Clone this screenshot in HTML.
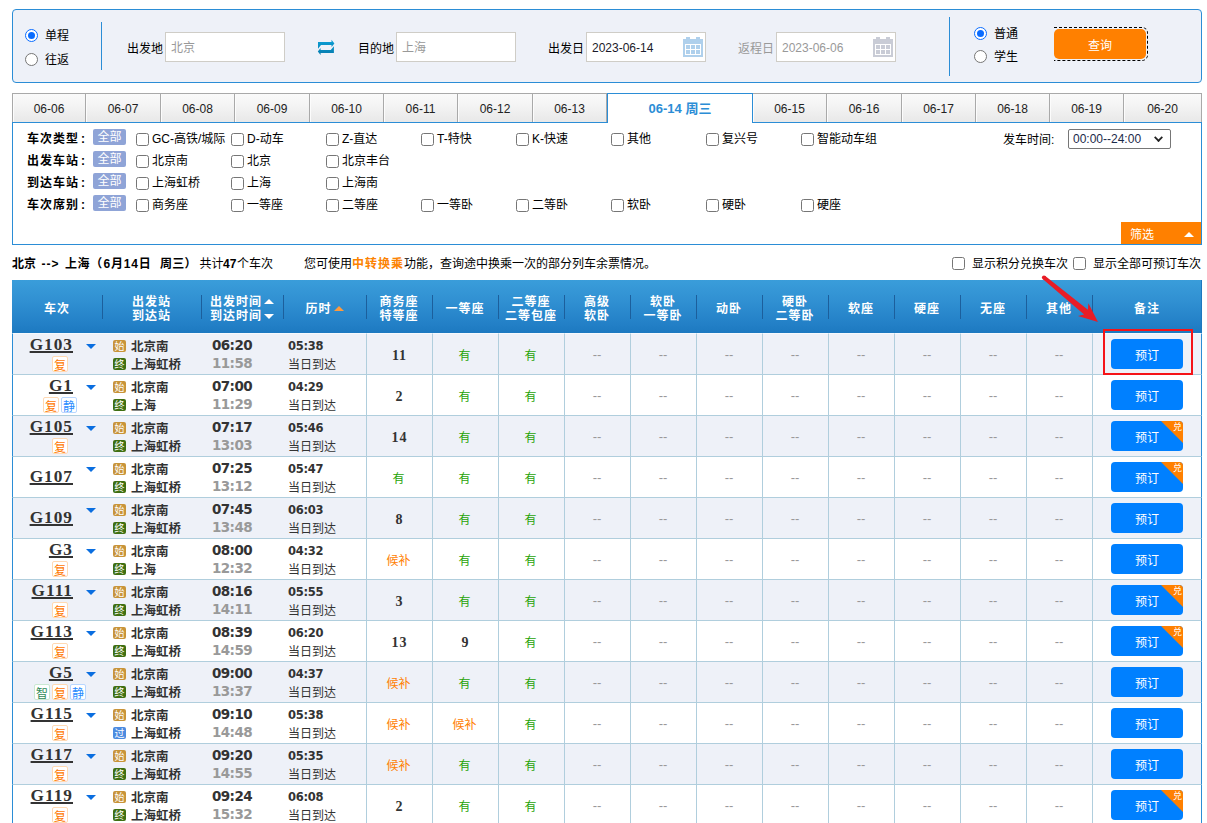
<!DOCTYPE html>
<html lang="zh-CN">
<head>
<meta charset="utf-8">
<title>车票预订</title>
<style>
*{margin:0;padding:0;box-sizing:border-box}
html,body{width:1207px;height:823px;overflow:hidden;background:#fff}
body{position:relative;font-family:"Liberation Sans","Noto Sans CJK SC",sans-serif;font-size:12px;color:#000;line-height:1}
ul{list-style:none}
i,em,u,s{font-style:normal;text-decoration:none}
.abs{position:absolute}

/* ---------- search panel ---------- */
#sear{position:absolute;left:12px;top:9px;width:1190px;height:74px;border:1px solid #2b8dd6;border-radius:4px;background:#eef1f8}
#sear .vl{position:absolute;width:1px;background:#2b8dd6}
.radio{position:absolute;width:13px;height:13px;border-radius:50%;border:1px solid #767676;background:#fff}
.radio.on{border:1.5px solid #0a6cff}
.radio.on:after{content:"";position:absolute;left:1.5px;top:1.5px;width:7px;height:7px;border-radius:50%;background:#0a6cff}
.rl{position:absolute;font-size:12px;line-height:14px;white-space:nowrap}
.lab{position:absolute;font-size:12px;line-height:16px;white-space:nowrap}
.inp{position:absolute;top:22px;width:120px;height:30px;border:1px solid #cfcdc7;background:#fff;font-size:12px;line-height:30px;padding-left:5px;color:#999;white-space:nowrap}
.cal{position:absolute;right:2px;top:4px}
#qwrap{position:absolute;left:1041px;top:17px;width:94px;height:34px;border:1px dashed #000;border-left:none;border-radius:0 6px 6px 0}
#qbtn{position:absolute;left:0;top:1px;width:92px;height:30px;border-radius:5px;background:#ff8000;color:#fff;font-size:12px;line-height:34px;text-align:center}

/* ---------- date tabs ---------- */
#tabs{position:absolute;left:12px;top:93px;width:1190px;height:30px}
#tabs:before{content:"";position:absolute;left:0;top:29px;width:100%;height:1px;background:#2b8dd6}
#tabs li{position:absolute;top:0;height:29px;border:1px solid #a9a9a9;border-left:none;border-bottom:none;background:linear-gradient(#fafafa,#f3f3f3 45%,#e8e8e8);font-size:12px;line-height:30px;text-align:center;color:#222;box-shadow:inset 1px 0 0 #fcfcfc}
#tabs li:first-child{border-left:1px solid #a9a9a9}
#tabs li.on{top:0;height:30px;z-index:1;border:1px solid #2b8dd6;border-bottom:none;background:#fff;color:#2b8dd6;font-weight:bold;font-size:13px;line-height:29px;box-shadow:none}

/* ---------- filter ---------- */
#filt{position:absolute;left:12px;top:122px;width:1190px;height:123px;border:1px solid #2b8dd6;border-top:none}
#filt .row{position:absolute;left:0;width:100%;height:22px}
#filt .fl{position:absolute;left:14px;top:3px;font-weight:bold;font-size:12px;line-height:16px;white-space:nowrap;letter-spacing:1px}
#filt .fl em{letter-spacing:0;margin-left:2px}
#filt .all{position:absolute;left:80px;top:1px;width:33px;height:16px;background:#8fa4d7;color:#fff;font-size:12px;line-height:16px;text-align:center;border-radius:2px}
.cb{position:absolute;top:3px;font-size:12px;line-height:16px;white-space:nowrap}
.cb i,.ck{display:inline-block;width:13px;height:13px;border:1px solid #767676;border-radius:2.5px;background:#fff;vertical-align:-2.5px;margin-right:3px}
#sel{position:absolute;left:1055px;top:7px;width:103px;height:20px;border:1px solid #767676;border-radius:2px;background:#fff;font-size:12px;line-height:19px;padding-left:4px;color:#1b2a4a}
#sel:after{content:"";position:absolute;right:8px;top:4px;width:5px;height:5px;border-right:2px solid #222;border-bottom:2px solid #222;transform:rotate(45deg) scale(.9)}
#sx{position:absolute;right:0;bottom:0;width:80px;height:22px;background:#ff8000;color:#fff;font-size:12px;line-height:26px;padding-left:9px}
#sx:after{content:"";position:absolute;right:7px;top:10px;border:5px solid transparent;border-top:none;border-bottom:5px solid #fff}

/* ---------- info line ---------- */
#info{position:absolute;left:12px;top:256px;width:1190px;height:16px;font-size:12px;line-height:16px;white-space:nowrap}
#info b{font-weight:bold}
#info .or{color:#fc8302;font-weight:bold;letter-spacing:1px}

/* ---------- table ---------- */
#thead{position:absolute;left:12px;top:280px;width:1190px;height:53px;z-index:2;background:linear-gradient(#3a9dda 0%,#3090d2 40%,#227fc6 85%,#1c79c0 100%);box-shadow:inset -1px 0 0 #1d78bf}
#thead div{position:absolute;top:0;height:53px;color:#fff;font-family:"Liberation Sans","Noto Sans CJK SC",sans-serif;font-weight:bold;font-size:12px;line-height:14.5px;letter-spacing:1px;text-align:center;display:flex;flex-direction:column;justify-content:center;white-space:nowrap;padding-top:5px}
#thead div:before{content:"";position:absolute;left:0;top:15px;width:1px;height:24px;background:#1c5f9c}
#thead div:first-child:before{display:none}
#thead .up{display:inline-block;border:5px solid transparent;border-top:none;border-bottom:5px solid #fff;vertical-align:2px;margin-left:2px}
#thead .dn{display:inline-block;border:5px solid transparent;border-bottom:none;border-top:5px solid #fff;vertical-align:1px;margin-left:2px}
#thead .upo{border-bottom-color:#ff9a3c}

table{position:absolute;left:12px;top:333px;width:1190px;border-collapse:separate;border-spacing:0;table-layout:fixed}
td{height:41px;border-top:1px solid #b0cedd;border-left:1px solid #b0cedd;text-align:center;vertical-align:middle;font-size:12px;padding:0;overflow:hidden}
tr:first-child td{border-top-color:#f6f9fd}
tr.bgc td{background:#eef1f8}
td.st,td.tm,td.du{border-left:none}
td.train{border-left:1px solid #2b8dd6}
td.bk{border-right:1px solid #2b8dd6}
td.train{position:relative;text-align:left}
.code{position:absolute;left:0;top:1px;width:60px;text-align:right;font-family:"Liberation Serif",serif;font-weight:bold;font-size:17.3px;line-height:20px;letter-spacing:1px}
.code a{text-decoration:underline;text-decoration-thickness:1.6px;text-underline-offset:1px;color:#333}
.dd{position:absolute;left:73px;top:10px;border:5.5px solid transparent;border-bottom:none;border-top:5.5px solid #0a6ee0}
.tags{position:absolute;left:-1px;top:22px;width:96px;text-align:center;font-size:0;white-space:nowrap}
.train.mid .code{top:10px}
.tag{display:inline-block;width:16px;height:16px;border:1px solid;border-radius:2px;font-size:12px;line-height:15px;text-align:center;margin:0 1px;font-family:"Noto Sans CJK SC",sans-serif}
.tf{border-color:#ffd9b3;background:#fff;color:#ff7800}
.tj{border-color:#b8d6ff;background:#fff;color:#2b8cff}
.tz{border-color:#c9e8d2;background:#fff;color:#2e8b57}
td.st{text-align:left;font-weight:bold;font-size:12.5px;padding-left:11px;color:#333}
td.st div{height:18px;line-height:18px;white-space:nowrap;position:relative;top:2px}
.ic{display:inline-block;width:13px;height:12px;border-radius:2px;color:#fff;font-size:10px;line-height:12px;text-align:center;font-weight:normal;vertical-align:1px;margin-right:5px;font-family:"Noto Sans CJK SC",sans-serif}
.sf{background:#c8943a}.zd{background:#3f6f12}.gd{background:#4c8be0}
td.tm{text-align:left;padding-left:11px;font-family:"DejaVu Sans",sans-serif;font-weight:bold;font-size:13.5px;letter-spacing:-.6px}
td.tm div{height:18px;line-height:18px;position:relative;top:0}
.t1{color:#333}.t2{color:#999}
td.du{text-align:left;padding-left:5px}
.d1{font-family:"DejaVu Sans",sans-serif;font-weight:bold;font-size:11.5px;letter-spacing:-.3px;height:18px;line-height:18px;color:#333;position:relative;top:1px}
.d2{height:18px;line-height:18px;color:#333;position:relative;top:2px}
td.yes{color:#26a306;font-size:12px;padding-top:4px;padding-right:2px}
td.hb{color:#ff8000;font-size:12px;padding-top:4px;padding-right:2px}
td.no{color:#999;font-size:13px;letter-spacing:0;padding-top:0;padding-right:1px}
td.num{font-family:"Liberation Serif",serif;font-weight:bold;font-size:14px;color:#333;padding-top:4px;letter-spacing:1px;text-indent:0}
.btn{position:relative;top:0;left:0;display:inline-block;width:72px;height:30px;border-radius:4px;background:#0080ff;color:#fff;font-size:12px;line-height:35px;text-align:center;overflow:hidden;vertical-align:middle}
.btn em{position:absolute;right:0;top:0;border-left:22px solid transparent;border-top:22px solid #ff8000}
.btn u{position:absolute;right:1px;top:1px;font-size:9px;line-height:10px;color:#fff}
</style>
</head>
<body>

<div id="sear">
  <span class="radio on" style="left:12px;top:19px"></span><span class="rl" style="left:32px;top:19px">单程</span>
  <span class="radio" style="left:12px;top:43px"></span><span class="rl" style="left:32px;top:43px">往返</span>
  <span class="vl" style="left:88px;top:12px;height:48px"></span>

  <span class="lab" style="left:114px;top:31px">出发地</span>
  <div class="inp" style="left:152px">北京</div>
  <svg class="abs" style="left:304px;top:29px" width="19" height="17" viewBox="317 39 19 17"><defs><linearGradient id="sg" x1="0" y1="0" x2="0" y2="1"><stop offset="0" stop-color="#0c9fd6"/><stop offset="1" stop-color="#067cae"/></linearGradient></defs><path d="M318 42 H331.5 V39.8 L334.4 43.4 L331.5 46.9 V45 H321 L318 48.8 Z M333.9 53 H320.6 V55.1 L317.8 51.5 L320.6 48.1 V50.1 H330.8 L333.9 46.2 Z" fill="url(#sg)"/></svg>
  <span class="lab" style="left:345px;top:31px">目的地</span>
  <div class="inp" style="left:383px">上海</div>

  <span class="lab" style="left:535px;top:31px">出发日</span>
  <div class="inp" style="left:573px;color:#1a1a2a">2023-06-14
    <svg class="cal" width="20" height="20" viewBox="0 0 20 20"><g fill="#afd0ec"><rect x="3" y="0" width="4" height="3"/><rect x="13" y="0" width="4" height="3"/><rect x="0" y="2" width="20" height="18"/></g><rect x="2" y="7" width="16" height="11" fill="#fff"/><g fill="#afd0ec"><rect x="3" y="8" width="4" height="4"/><rect x="8" y="8" width="4" height="4"/><rect x="13" y="8" width="4" height="4"/><rect x="3" y="13" width="4" height="4"/><rect x="8" y="13" width="4" height="4"/><rect x="13" y="13" width="4" height="4"/></g></svg>
  </div>
  <span class="lab" style="left:725px;top:31px;color:#999">返程日</span>
  <div class="inp" style="left:763px">2023-06-06
    <svg class="cal" width="20" height="20" viewBox="0 0 20 20"><g fill="#c9ccd6"><rect x="3" y="0" width="4" height="3"/><rect x="13" y="0" width="4" height="3"/><rect x="0" y="2" width="20" height="18"/></g><rect x="2" y="7" width="16" height="11" fill="#fff"/><g fill="#c9ccd6"><rect x="3" y="8" width="4" height="4"/><rect x="8" y="8" width="4" height="4"/><rect x="13" y="8" width="4" height="4"/><rect x="3" y="13" width="4" height="4"/><rect x="8" y="13" width="4" height="4"/><rect x="13" y="13" width="4" height="4"/></g></svg>
  </div>

  <span class="vl" style="left:936px;top:7px;height:59px"></span>
  <span class="radio on" style="left:961px;top:17px"></span><span class="rl" style="left:981px;top:17px">普通</span>
  <span class="radio" style="left:961px;top:40px"></span><span class="rl" style="left:981px;top:40px">学生</span>
  <div id="qwrap"><div id="qbtn">查询</div></div>
</div>

<ul id="tabs">
<li style="left:0px;width:74px">06-06</li>
<li style="left:74px;width:75px">06-07</li>
<li style="left:149px;width:74px">06-08</li>
<li style="left:223px;width:75px">06-09</li>
<li style="left:298px;width:74px">06-10</li>
<li style="left:372px;width:74px">06-11</li>
<li style="left:446px;width:75px">06-12</li>
<li style="left:521px;width:74px">06-13</li>
<li class="on" style="left:595px;width:146px">06-14 周三</li>
<li style="left:741px;width:74px">06-15</li>
<li style="left:815px;width:75px">06-16</li>
<li style="left:890px;width:74px">06-17</li>
<li style="left:964px;width:74px">06-18</li>
<li style="left:1038px;width:74px">06-19</li>
<li style="left:1112px;width:78px">06-20</li>
</ul>

<div id="filt">
  <div class="row" style="top:6px"><span class="fl">车次类型<em>:</em></span><span class="all">全部</span><label class="cb" style="left:123px"><i></i>GC-高铁/城际</label><label class="cb" style="left:218px"><i></i>D-动车</label><label class="cb" style="left:313px"><i></i>Z-直达</label><label class="cb" style="left:408px"><i></i>T-特快</label><label class="cb" style="left:503px"><i></i>K-快速</label><label class="cb" style="left:598px"><i></i>其他</label><label class="cb" style="left:693px"><i></i>复兴号</label><label class="cb" style="left:788px"><i></i>智能动车组</label></div>
  <div class="row" style="top:28px"><span class="fl">出发车站<em>:</em></span><span class="all">全部</span><label class="cb" style="left:123px"><i></i>北京南</label><label class="cb" style="left:218px"><i></i>北京</label><label class="cb" style="left:313px"><i></i>北京丰台</label></div>
  <div class="row" style="top:50px"><span class="fl">到达车站<em>:</em></span><span class="all">全部</span><label class="cb" style="left:123px"><i></i>上海虹桥</label><label class="cb" style="left:218px"><i></i>上海</label><label class="cb" style="left:313px"><i></i>上海南</label></div>
  <div class="row" style="top:72px"><span class="fl">车次席别<em>:</em></span><span class="all">全部</span><label class="cb" style="left:123px"><i></i>商务座</label><label class="cb" style="left:218px"><i></i>一等座</label><label class="cb" style="left:313px"><i></i>二等座</label><label class="cb" style="left:408px"><i></i>一等卧</label><label class="cb" style="left:503px"><i></i>二等卧</label><label class="cb" style="left:598px"><i></i>软卧</label><label class="cb" style="left:693px"><i></i>硬卧</label><label class="cb" style="left:788px"><i></i>硬座</label></div>
  <span class="lab" style="left:990px;top:10px;font-size:12px">发车时间:</span>
  <div id="sel">00:00--24:00</div>
  <div id="sx">筛选</div>
</div>

<div id="info">
  <b class="abs" style="left:0">北京</b><b class="abs" style="left:29.5px;letter-spacing:1px">--&gt;</b><b class="abs" style="left:53px;letter-spacing:.6px">上海（</b><b class="abs" style="left:91.5px;letter-spacing:.8px">6月14日</b><b class="abs" style="left:148px;letter-spacing:.3px">周三）</b><span class="abs" style="left:187.5px">共计</span><b class="abs" style="left:211px">47</b><span class="abs" style="left:225px">个车次</span>
  <span class="abs" style="left:292px;top:0">您可使用<span class="or">中转换乘</span>功能，查询途中换乘一次的部分列车余票情况。</span>
  <span class="abs" style="left:940px;top:0"><i class="ck" style="margin-right:7px;vertical-align:-2px"></i>显示积分兑换车次</span>
  <span class="abs" style="left:1061px;top:0"><i class="ck" style="margin-right:7px;vertical-align:-2px"></i>显示全部可预订车次</span>
</div>

<div id="thead">
  <div style="left:0;width:90px">车次</div>
  <div style="left:90px;width:99px"><span>出发站</span><span>到达站</span></div>
  <div style="left:189px;width:82px"><span>出发时间<i class="up"></i></span><span>到达时间<i class="dn"></i></span></div>
  <div style="left:271px;width:83px"><span>历时<i class="up upo"></i></span></div>
  <div style="left:354px;width:66px"><span>商务座</span><span>特等座</span></div>
  <div style="left:420px;width:66px">一等座</div>
  <div style="left:486px;width:66px"><span>二等座</span><span>二等包座</span></div>
  <div style="left:552px;width:66px"><span>高级</span><span>软卧</span></div>
  <div style="left:618px;width:66px"><span>软卧</span><span>一等卧</span></div>
  <div style="left:684px;width:66px">动卧</div>
  <div style="left:750px;width:66px"><span>硬卧</span><span>二等卧</span></div>
  <div style="left:816px;width:66px">软座</div>
  <div style="left:882px;width:66px">硬座</div>
  <div style="left:948px;width:66px">无座</div>
  <div style="left:1014px;width:66px">其他</div>
  <div style="left:1080px;width:110px">备注</div>
</div>

<table>
<colgroup><col style="width:90px"><col style="width:99px"><col style="width:82px"><col style="width:83px"><col style="width:66px"><col style="width:66px"><col style="width:66px"><col style="width:66px"><col style="width:66px"><col style="width:66px"><col style="width:66px"><col style="width:66px"><col style="width:66px"><col style="width:66px"><col style="width:66px"><col style="width:110px"></colgroup>
<tr class="bgc"><td class="train"><div class="code"><a>G103</a></div><s class="dd"></s><div class="tags"><i class="tag tf">复</i></div></td><td class="st"><div><b class="ic sf">始</b>北京南</div><div><b class="ic zd">终</b>上海虹桥</div></td><td class="tm"><div class="t1">06:20</div><div class="t2">11:58</div></td><td class="du"><div class="d1">05:38</div><div class="d2">当日到达</div></td><td class="num">11</td><td class="yes">有</td><td class="yes">有</td><td class="no">--</td><td class="no">--</td><td class="no">--</td><td class="no">--</td><td class="no">--</td><td class="no">--</td><td class="no">--</td><td class="no">--</td><td class="bk"><a class="btn">预订</a></td></tr>
<tr class=""><td class="train"><div class="code"><a>G1</a></div><s class="dd"></s><div class="tags"><i class="tag tf">复</i><i class="tag tj">静</i></div></td><td class="st"><div><b class="ic sf">始</b>北京南</div><div><b class="ic zd">终</b>上海</div></td><td class="tm"><div class="t1">07:00</div><div class="t2">11:29</div></td><td class="du"><div class="d1">04:29</div><div class="d2">当日到达</div></td><td class="num">2</td><td class="yes">有</td><td class="yes">有</td><td class="no">--</td><td class="no">--</td><td class="no">--</td><td class="no">--</td><td class="no">--</td><td class="no">--</td><td class="no">--</td><td class="no">--</td><td class="bk"><a class="btn">预订</a></td></tr>
<tr class="bgc"><td class="train"><div class="code"><a>G105</a></div><s class="dd"></s><div class="tags"><i class="tag tf">复</i></div></td><td class="st"><div><b class="ic sf">始</b>北京南</div><div><b class="ic zd">终</b>上海虹桥</div></td><td class="tm"><div class="t1">07:17</div><div class="t2">13:03</div></td><td class="du"><div class="d1">05:46</div><div class="d2">当日到达</div></td><td class="num">14</td><td class="yes">有</td><td class="yes">有</td><td class="no">--</td><td class="no">--</td><td class="no">--</td><td class="no">--</td><td class="no">--</td><td class="no">--</td><td class="no">--</td><td class="no">--</td><td class="bk"><a class="btn">预订<em></em><u>兑</u></a></td></tr>
<tr class=""><td class="train mid"><div class="code"><a>G107</a></div><s class="dd"></s><div class="tags"></div></td><td class="st"><div><b class="ic sf">始</b>北京南</div><div><b class="ic zd">终</b>上海虹桥</div></td><td class="tm"><div class="t1">07:25</div><div class="t2">13:12</div></td><td class="du"><div class="d1">05:47</div><div class="d2">当日到达</div></td><td class="yes">有</td><td class="yes">有</td><td class="yes">有</td><td class="no">--</td><td class="no">--</td><td class="no">--</td><td class="no">--</td><td class="no">--</td><td class="no">--</td><td class="no">--</td><td class="no">--</td><td class="bk"><a class="btn">预订<em></em><u>兑</u></a></td></tr>
<tr class="bgc"><td class="train mid"><div class="code"><a>G109</a></div><s class="dd"></s><div class="tags"></div></td><td class="st"><div><b class="ic sf">始</b>北京南</div><div><b class="ic zd">终</b>上海虹桥</div></td><td class="tm"><div class="t1">07:45</div><div class="t2">13:48</div></td><td class="du"><div class="d1">06:03</div><div class="d2">当日到达</div></td><td class="num">8</td><td class="yes">有</td><td class="yes">有</td><td class="no">--</td><td class="no">--</td><td class="no">--</td><td class="no">--</td><td class="no">--</td><td class="no">--</td><td class="no">--</td><td class="no">--</td><td class="bk"><a class="btn">预订</a></td></tr>
<tr class=""><td class="train"><div class="code"><a>G3</a></div><s class="dd"></s><div class="tags"><i class="tag tf">复</i></div></td><td class="st"><div><b class="ic sf">始</b>北京南</div><div><b class="ic zd">终</b>上海</div></td><td class="tm"><div class="t1">08:00</div><div class="t2">12:32</div></td><td class="du"><div class="d1">04:32</div><div class="d2">当日到达</div></td><td class="hb">候补</td><td class="yes">有</td><td class="yes">有</td><td class="no">--</td><td class="no">--</td><td class="no">--</td><td class="no">--</td><td class="no">--</td><td class="no">--</td><td class="no">--</td><td class="no">--</td><td class="bk"><a class="btn">预订</a></td></tr>
<tr class="bgc"><td class="train"><div class="code"><a>G111</a></div><s class="dd"></s><div class="tags"><i class="tag tf">复</i></div></td><td class="st"><div><b class="ic sf">始</b>北京南</div><div><b class="ic zd">终</b>上海虹桥</div></td><td class="tm"><div class="t1">08:16</div><div class="t2">14:11</div></td><td class="du"><div class="d1">05:55</div><div class="d2">当日到达</div></td><td class="num">3</td><td class="yes">有</td><td class="yes">有</td><td class="no">--</td><td class="no">--</td><td class="no">--</td><td class="no">--</td><td class="no">--</td><td class="no">--</td><td class="no">--</td><td class="no">--</td><td class="bk"><a class="btn">预订<em></em><u>兑</u></a></td></tr>
<tr class=""><td class="train"><div class="code"><a>G113</a></div><s class="dd"></s><div class="tags"><i class="tag tf">复</i></div></td><td class="st"><div><b class="ic sf">始</b>北京南</div><div><b class="ic zd">终</b>上海虹桥</div></td><td class="tm"><div class="t1">08:39</div><div class="t2">14:59</div></td><td class="du"><div class="d1">06:20</div><div class="d2">当日到达</div></td><td class="num">13</td><td class="num">9</td><td class="yes">有</td><td class="no">--</td><td class="no">--</td><td class="no">--</td><td class="no">--</td><td class="no">--</td><td class="no">--</td><td class="no">--</td><td class="no">--</td><td class="bk"><a class="btn">预订<em></em><u>兑</u></a></td></tr>
<tr class="bgc"><td class="train"><div class="code"><a>G5</a></div><s class="dd"></s><div class="tags"><i class="tag tz">智</i><i class="tag tf">复</i><i class="tag tj">静</i></div></td><td class="st"><div><b class="ic sf">始</b>北京南</div><div><b class="ic zd">终</b>上海虹桥</div></td><td class="tm"><div class="t1">09:00</div><div class="t2">13:37</div></td><td class="du"><div class="d1">04:37</div><div class="d2">当日到达</div></td><td class="hb">候补</td><td class="yes">有</td><td class="yes">有</td><td class="no">--</td><td class="no">--</td><td class="no">--</td><td class="no">--</td><td class="no">--</td><td class="no">--</td><td class="no">--</td><td class="no">--</td><td class="bk"><a class="btn">预订</a></td></tr>
<tr class=""><td class="train"><div class="code"><a>G115</a></div><s class="dd"></s><div class="tags"><i class="tag tf">复</i></div></td><td class="st"><div><b class="ic sf">始</b>北京南</div><div><b class="ic gd">过</b>上海虹桥</div></td><td class="tm"><div class="t1">09:10</div><div class="t2">14:48</div></td><td class="du"><div class="d1">05:38</div><div class="d2">当日到达</div></td><td class="hb">候补</td><td class="hb">候补</td><td class="yes">有</td><td class="no">--</td><td class="no">--</td><td class="no">--</td><td class="no">--</td><td class="no">--</td><td class="no">--</td><td class="no">--</td><td class="no">--</td><td class="bk"><a class="btn">预订</a></td></tr>
<tr class="bgc"><td class="train"><div class="code"><a>G117</a></div><s class="dd"></s><div class="tags"><i class="tag tf">复</i></div></td><td class="st"><div><b class="ic sf">始</b>北京南</div><div><b class="ic zd">终</b>上海虹桥</div></td><td class="tm"><div class="t1">09:20</div><div class="t2">14:55</div></td><td class="du"><div class="d1">05:35</div><div class="d2">当日到达</div></td><td class="hb">候补</td><td class="yes">有</td><td class="yes">有</td><td class="no">--</td><td class="no">--</td><td class="no">--</td><td class="no">--</td><td class="no">--</td><td class="no">--</td><td class="no">--</td><td class="no">--</td><td class="bk"><a class="btn">预订</a></td></tr>
<tr class=""><td class="train"><div class="code"><a>G119</a></div><s class="dd"></s><div class="tags"><i class="tag tf">复</i></div></td><td class="st"><div><b class="ic sf">始</b>北京南</div><div><b class="ic zd">终</b>上海虹桥</div></td><td class="tm"><div class="t1">09:24</div><div class="t2">15:32</div></td><td class="du"><div class="d1">06:08</div><div class="d2">当日到达</div></td><td class="num">2</td><td class="yes">有</td><td class="yes">有</td><td class="no">--</td><td class="no">--</td><td class="no">--</td><td class="no">--</td><td class="no">--</td><td class="no">--</td><td class="no">--</td><td class="no">--</td><td class="bk"><a class="btn">预订<em></em><u>兑</u></a></td></tr>
</table>

<!-- annotation -->
<svg class="abs" style="left:1030px;top:265px;z-index:5" width="177" height="120" viewBox="1030 265 177 120">
  <rect x="1104" y="330" width="88" height="44" fill="none" stroke="#f51318" stroke-width="2"/>
  <circle cx="1044.0" cy="277.6" r="2.1" fill="#e81c26"/>
  <polygon points="1045.3,276.1 1087.9,309.8 1088.4,303.2 1098.0,322.0 1078.0,316.0 1084.1,314.5 1042.7,279.1" fill="#e81c26"/>
</svg>

</body>
</html>
